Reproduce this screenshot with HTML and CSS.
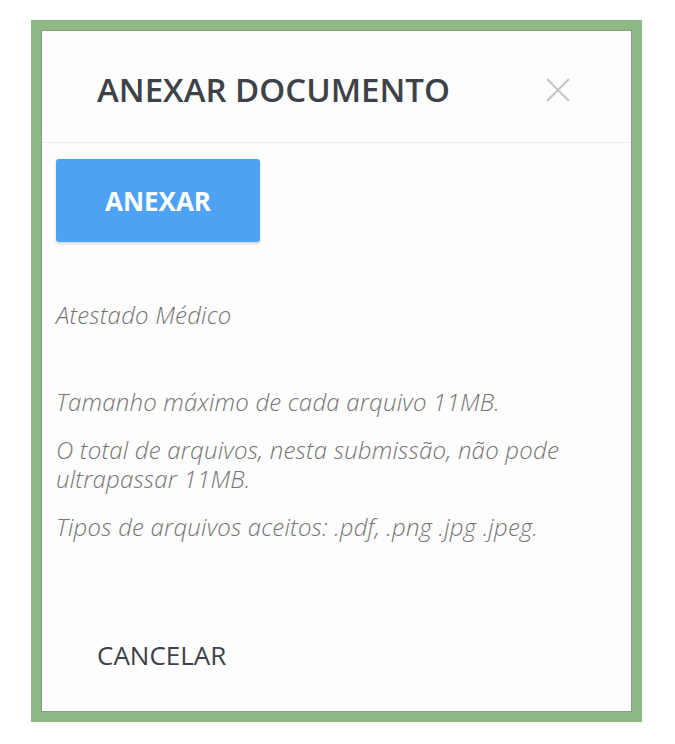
FILE: index.html
```
<!DOCTYPE html>
<html lang="pt">
<head>
  <meta charset="UTF-8" />
  <title>Anexar documento</title>
  <link rel="stylesheet" href="styles.css">
</head>
<body>
  <!-- moldura verde em volta do modal -->
  <div class="frame">
    <div class="modal">

      <!-- cabeçalho -->
      <div class="modal-header">
        <h2 class="modal-title">ANEXAR DOCUMENTO</h2>
        <button class="close" aria-label="Fechar">
          <svg width="26" height="26" viewBox="0 0 26 26">
            <path d="M2 2 L24 24 M24 2 L2 24" stroke="#c4c4c4" stroke-width="2" fill="none" />
          </svg>
        </button>
      </div>

      <!-- corpo -->
      <div class="modal-body">
        <button class="btn-anexar">ANEXAR</button>
        <p class="doc-name">Atestado Médico</p>
        <div class="rules">
          <p>Tamanho máximo de cada arquivo 11MB.</p>
          <p>O total de arquivos, nesta submissão, não pode ultrapassar 11MB.</p>
          <p>Tipos de arquivos aceitos: .pdf, .png .jpg .jpeg.</p>
        </div>
      </div>

      <!-- rodapé -->
      <div class="modal-footer">
        <button class="btn-cancelar">CANCELAR</button>
      </div>

    </div>
  </div>
</body>
</html>
```

FILE: styles.css
```
/* ---------- base ---------- */
body {
  margin: 0;
  background: #ffffff;
  font-family: 'Open Sans', 'Liberation Sans', sans-serif;
  color: #3c4247;
}

/* ---------- moldura ---------- */
.frame {
  width: 611px;
  height: 702px;
  margin: 20px 0 0 31px;
  border: 10px solid #8db985;
  box-sizing: border-box;
}

.modal {
  height: 100%;
  box-sizing: border-box;
  border: 1px solid #8e968b;
  background: #fdfdfd;
  display: flex;
  flex-direction: column;
}

/* ---------- cabeçalho ---------- */
.modal-header {
  height: 112px;
  box-sizing: border-box;
  display: flex;
  align-items: center;
  justify-content: space-between;
  padding: 6px 60px 0 55px;
  border-bottom: 1px solid #ececec;
  flex-shrink: 0;
}

.modal-title {
  margin: 0;
  font-size: 33px;
  font-weight: 600;
  color: #3c4247;
}

.close {
  background: none;
  border: none;
  padding: 0;
  cursor: pointer;
  display: flex;
}

/* ---------- corpo ---------- */
.modal-body {
  flex: 1;
  padding: 16px 0 0 14px;
}

.btn-anexar {
  width: 204px;
  height: 83px;
  border: none;
  border-radius: 3px;
  background-color: #4ea2f4;
  color: #ffffff;
  font-family: 'Open Sans', 'Liberation Sans', sans-serif;
  font-size: 26px;
  font-weight: 700;
  box-shadow: 0 2px 3px rgba(0, 0, 0, 0.15);
  cursor: pointer;
}

.doc-name,
.rules p {
  font-size: 24px;
  font-style: italic;
  font-weight: 300;
  letter-spacing: 0.2px;
  color: #747474;
  line-height: 29px;
}

.doc-name {
  margin: 58px 0 0;
}

.rules {
  margin-top: 58px;
}

.rules p {
  margin: 0 10px 19px 0;
}

/* ---------- rodapé ---------- */
.modal-footer {
  height: 104px;
  box-sizing: border-box;
  display: flex;
  align-items: center;
  padding: 0 0 8px 55px;
  flex-shrink: 0;
}

.btn-cancelar {
  background: none;
  border: none;
  padding: 0;
  font-family: 'Open Sans', 'Liberation Sans', sans-serif;
  font-size: 26px;
  color: #3c4247;
  cursor: pointer;
}
```
